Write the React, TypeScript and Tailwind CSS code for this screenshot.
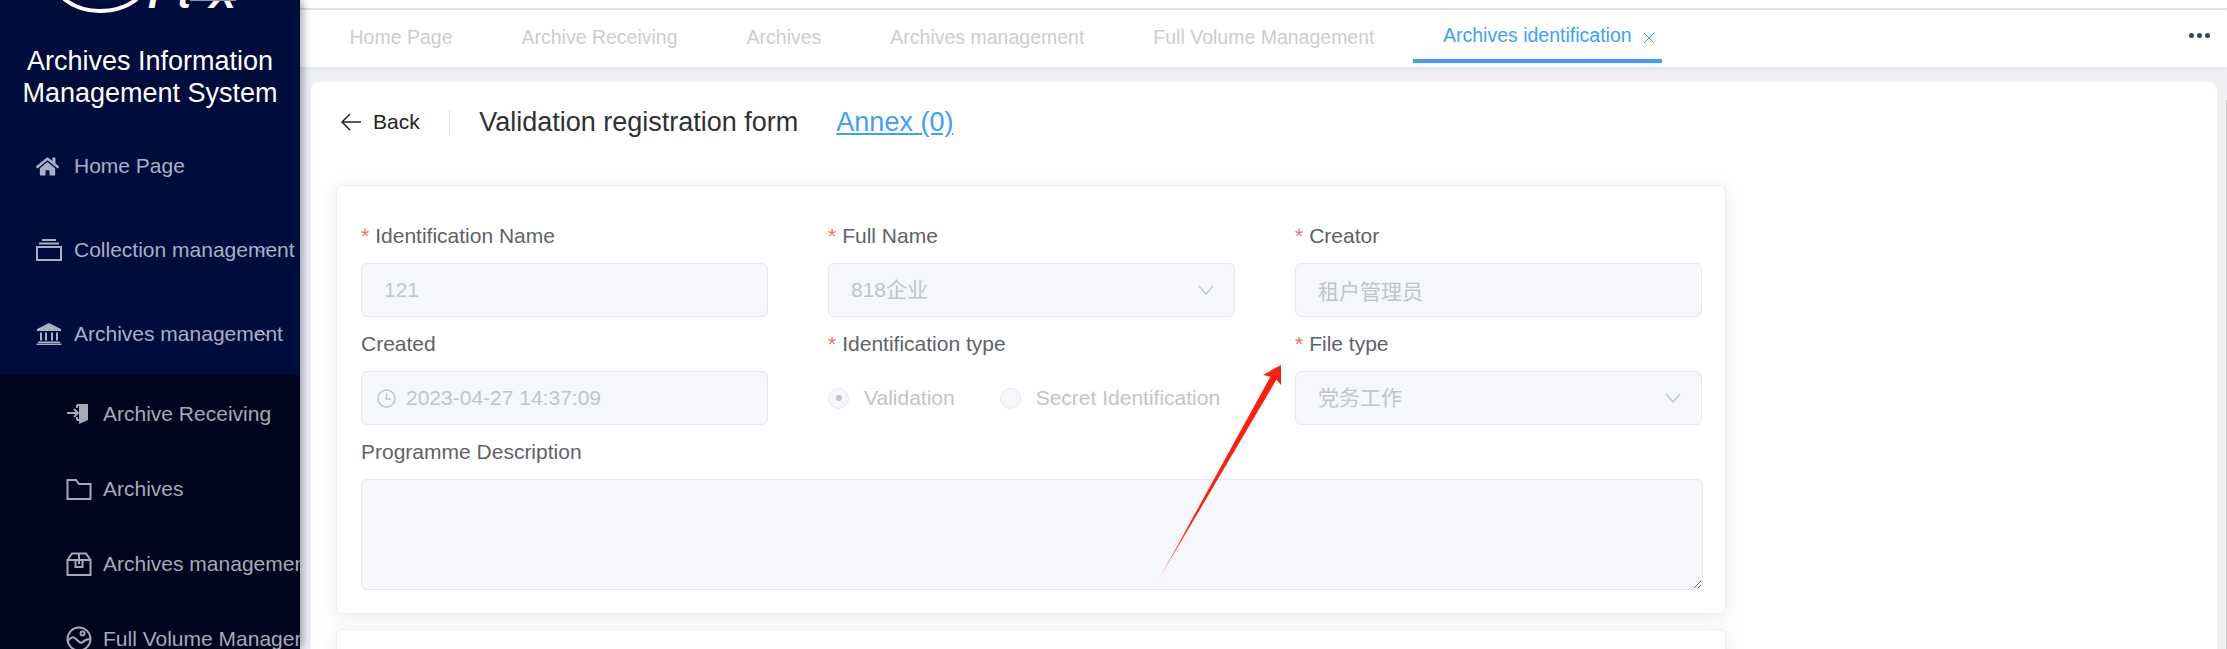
import { FaHome } from 'react-icons/fa';

const menu = [
  { label: 'Home Page', icon: <FaHome className="w-[23px] h-[23px]" /> },
  { label: 'Collection management', icon: <CollectionIcon />, arrow: 'down' },
  { label: 'Archives management', icon: <BankIcon />, arrow: 'up' },
];

const subMenu = [
  { label: 'Archive Receiving', icon: <DoorIcon /> },
  { label: 'Archives', icon: <FolderIcon /> },
  { label: 'Archives management', icon: <BoxIcon /> },
  { label: 'Full Volume Management', icon: <ChartIcon /> },
];

const tabs = ['Home Page', 'Archive Receiving', 'Archives', 'Archives management', 'Full Volume Management'];

function CollectionIcon() {
  return (
    <svg width="26" height="22" viewBox="0 0 26 22" fill="none" stroke="currentColor" strokeWidth="2">
      <rect x="1" y="8" width="24" height="13" />
      <path d="M3 4.500h20M6 1h14" />
    </svg>
  );
}

function BankIcon() {
  return (
    <svg width="26" height="22" viewBox="0 0 26 22" fill="currentColor">
      <path d="M13 0 25 6v2H1V6z" />
      <path d="M4 9.500h2v8H4zM9 9.500h2v8H9zM15 9.500h2v8h-2zM20 9.500h2v8h-2z" />
      <path d="M2 18.500h22V20H2zM0.500 20.500h25V22H.5z" />
    </svg>
  );
}

function DoorIcon() {
  return (
    <svg width="24" height="22" viewBox="0 0 24 22" fill="none" stroke="currentColor" strokeWidth="2">
      <path d="M13 1h9v16l-9 4z" fill="currentColor" stroke="none" />
      <path d="M11 2h3M11 17h3M11 2v3M11 14v3" />
      <path d="M1 10h11M8 6l4 4-4 4" />
    </svg>
  );
}

function FolderIcon() {
  return (
    <svg width="26" height="22" viewBox="0 0 26 22" fill="none" stroke="currentColor" strokeWidth="2">
      <path d="M1.500 2h8.500l3 4H24.500v15H1.500z" />
    </svg>
  );
}

function BoxIcon() {
  return (
    <svg width="26" height="24" viewBox="0 0 26 24" fill="none" stroke="currentColor" strokeWidth="2">
      <path d="M1.500 8h23v15h-23zM1.500 8 6 1.500h14L24.500 8" />
      <path d="M9.500 8V15h7V8M13 1.500V12" />
    </svg>
  );
}

function ChartIcon() {
  return (
    <svg width="26" height="26" viewBox="0 0 26 26" fill="none" stroke="currentColor" strokeWidth="2">
      <circle cx="13" cy="13" r="11.500" />
      <path d="M2 15c3-4 5-5 8-2s5 5 7 3 3-3 7-3" />
      <circle cx="16.500" cy="7.500" r="2" />
    </svg>
  );
}

function Chevron() {
  return (
    <svg width="16" height="10" viewBox="0 0 16 10" fill="none" stroke="currentColor" strokeWidth="1.200">
      <path d="M1 1l7 8 7-8" />
    </svg>
  );
}

function MenuArrow({ up }: { up: boolean }) {
  return (
    <svg width="14" height="7" viewBox="0 0 14 7" fill="none" stroke="#c3c8d8" strokeWidth="1" className="absolute left-[254px] top-[38px]">
      <path d={up ? 'M1 6.500 7 .5l6 6' : 'M1 .5l6 6 6-6'} />
    </svg>
  );
}

function Label({ text, required = false }: { text: string; required?: boolean }) {
  return (
    <div className="h-[54px] flex items-center text-[21px] text-[#606266] whitespace-nowrap">
      {required && <span className="text-[#f56c6c] mr-[6px]">*</span>}
      {text}
    </div>
  );
}

function Field({ value }: { value: string }) {
  return (
    <input
      disabled
      value={value}
      className="w-full h-[54px] px-[22px] bg-[#f5f7fa] border border-[#e4e7ed] rounded-[6px] text-[21px] text-[#c0c4cc] outline-none"
    />
  );
}

function SelectField({ value }: { value: string }) {
  return (
    <div className="h-[54px] pl-[22px] pr-[20px] flex items-center justify-between bg-[#f5f7fa] border border-[#e4e7ed] rounded-[6px] text-[21px] text-[#c0c4cc]">
      <span>{value}</span>
      <Chevron />
    </div>
  );
}

function Radio({ label, checked = false }: { label: string; checked?: boolean }) {
  return (
    <div className="flex items-center gap-[15px] text-[21px] text-[#c0c4cc] whitespace-nowrap">
      <span className="w-[21px] h-[21px] rounded-full bg-[#f5f7fa] border border-[#e4e7ed] flex items-center justify-center">
        {checked && <span className="w-[6px] h-[6px] rounded-full bg-[#c0c4cc]" />}
      </span>
      {label}
    </div>
  );
}

function Sidebar() {
  return (
    <aside className="w-[300px] shrink-0 h-full overflow-hidden bg-[#000c3b] text-[#a9afc4] text-[21px] relative z-10 shadow-[3px_0_8px_rgba(0,21,41,0.35)]">
      <svg width="300" height="14" viewBox="0 0 300 14" className="block">
        <path d="M64 -1C74 7 87 11 100 11S127 7 137 -1" fill="none" stroke="#fff" strokeWidth="4" />
        <text
          x="148"
          y="8"
          fill="#fff"
          fontSize="40"
          fontWeight="700"
          fontStyle="italic"
          textLength="88"
          lengthAdjust="spacing"
          fontFamily="'Liberation Sans', sans-serif"
        >
          ItX
        </text>
        <rect x="190" y="0" width="46" height="1" fill="#8d93ab" />
      </svg>
      <h1 className="mt-[32px] mb-[15px] text-center text-white text-[27px] leading-[31.500px] font-normal">
        Archives Information
        <br />
        Management System
      </h1>
      {menu.map((item) => (
        <div key={item.label} className="h-[84px] pl-[36px] flex items-center relative whitespace-nowrap">
          <span className="w-[38px] shrink-0 flex items-center">{item.icon}</span>
          {item.label}
          {item.arrow && <MenuArrow up={item.arrow === 'up'} />}
        </div>
      ))}
      <div className="bg-[#00051e] text-[#a6a9b5] -mt-px pt-px">
        {subMenu.map((item) => (
          <div key={item.label} className="h-[75px] pl-[66px] flex items-center whitespace-nowrap">
            <span className="w-[37px] shrink-0 flex items-center">{item.icon}</span>
            {item.label}
          </div>
        ))}
      </div>
    </aside>
  );
}

export default function App() {
  return (
    <div className="relative flex h-screen w-screen overflow-hidden font-['Liberation_Sans','Noto_Sans_CJK_SC',sans-serif]">
      <Sidebar />
      <main className="flex-1 min-w-0 flex flex-col bg-[#eef0f4]">
        <div className="h-[10px] shrink-0 bg-white border-b-2 border-[#e4e4e4]" />
        <div className="h-[57px] shrink-0 bg-white flex items-start pl-[15px] relative z-[1] shadow-[0_1px_4px_rgba(0,0,0,0.08)]">
          {tabs.map((tab) => (
            <div key={tab} className="h-[53px] px-[34.500px] pt-[2px] flex items-center text-[19.500px] text-[#cdcdcd] whitespace-nowrap">
              {tab}
            </div>
          ))}
          <div className="h-[53px] ml-[4px] pl-[30px] pr-[7px] pt-[3px] flex items-center gap-[11px] border-b-4 border-[#409eff] text-[19.500px] text-[#409eff] whitespace-nowrap">
            Archives identification
            <svg width="12" height="12" viewBox="0 0 12 12" stroke="currentColor" strokeWidth="1" className="mt-[4px]">
              <path d="M1 1l10 10M11 1 1 11" />
            </svg>
          </div>
          <div className="ml-auto mr-[17px] mt-[23px] flex gap-[3px]">
            <span className="w-[5px] h-[5px] rounded-full bg-[#2c4a5a]" />
            <span className="w-[5px] h-[5px] rounded-full bg-[#2c4a5a]" />
            <span className="w-[5px] h-[5px] rounded-full bg-[#2c4a5a]" />
          </div>
        </div>
        <div className="flex-1 min-h-0 pt-[15px] pl-[11px] pr-[10px]">
          <div className="h-full bg-white rounded-t-[9px] px-[25px] pt-[20px] overflow-hidden">
            <div className="h-[40px] mb-[43px] flex items-center whitespace-nowrap">
              <div className="flex items-center gap-[12px] pl-[5px] text-[21px] text-[#222]">
                <svg width="20" height="18" viewBox="0 0 20 18" fill="none" stroke="currentColor" strokeWidth="1.500">
                  <path d="M20 9H1M9 1 1 9l8 8" />
                </svg>
                Back
              </div>
              <div className="w-[1.500px] h-[24px] bg-[#dcdfe6] ml-[29px] mr-[29px]" />
              <span className="text-[27px] text-[#303133]">Validation registration form</span>
              <span className="ml-[38px] text-[27px] text-[#409eff] underline">Annex (0)</span>
            </div>
            <div className="w-[1390px] px-[24px] pt-[23px] pb-[23px] border border-[#ebeef5] rounded-[6px] bg-white shadow-[0_3px_18px_rgba(0,0,0,0.08)]">
              <div className="grid grid-cols-[407px_407px_407px] gap-x-[60px]">
                <div>
                  <Label text="Identification Name" required />
                  <Field value="121" />
                </div>
                <div>
                  <Label text="Full Name" required />
                  <SelectField value="818企业" />
                </div>
                <div>
                  <Label text="Creator" required />
                  <Field value="租户管理员" />
                </div>
                <div>
                  <Label text="Created" />
                  <div className="h-[54px] pl-[15px] flex items-center gap-[10px] bg-[#f5f7fa] border border-[#e4e7ed] rounded-[6px] text-[21px] text-[#c0c4cc]">
                    <svg width="19" height="19" viewBox="0 0 19 19" fill="none" stroke="currentColor" strokeWidth="1.400">
                      <circle cx="9.500" cy="9.500" r="8.500" />
                      <path d="M9.500 4.500v5.500h4.500" />
                    </svg>
                    2023-04-27 14:37:09
                  </div>
                </div>
                <div>
                  <Label text="Identification type" required />
                  <div className="h-[54px] flex items-center gap-[45px]">
                    <Radio label="Validation" checked />
                    <Radio label="Secret Identification" />
                  </div>
                </div>
                <div>
                  <Label text="File type" required />
                  <SelectField value="党务工作" />
                </div>
                <div className="col-span-3">
                  <Label text="Programme Description" />
                  <textarea disabled className="block w-[1342px] h-[111px] bg-[#f5f7fa] border border-[#e4e7ed] rounded-[6px] outline-none" />
                </div>
              </div>
            </div>
            <div className="w-[1390px] h-[40px] mt-[15px] border border-[#ebeef5] rounded-[6px] bg-white shadow-[0_3px_18px_rgba(0,0,0,0.08)]" />
          </div>
        </div>
      </main>
      <svg width="122" height="214" viewBox="0 0 122 214" className="absolute left-[1159px] top-[365px] pointer-events-none">
        <defs>
          <linearGradient id="tail" x1="0" y1="1" x2="0.300" y2="0.800">
            <stop offset="0" stopColor="#ff9a90" />
            <stop offset="1" stopColor="#ff1e0e" />
          </linearGradient>
        </defs>
        <polygon points="122,0 104,10 111.500,11.500 0,214 117.500,14.500 122,20" fill="url(#tail)" />
      </svg>
      <div className="absolute right-0 top-[100px] bottom-0 w-px bg-[#c9c9c9]" />
    </div>
  );
}
